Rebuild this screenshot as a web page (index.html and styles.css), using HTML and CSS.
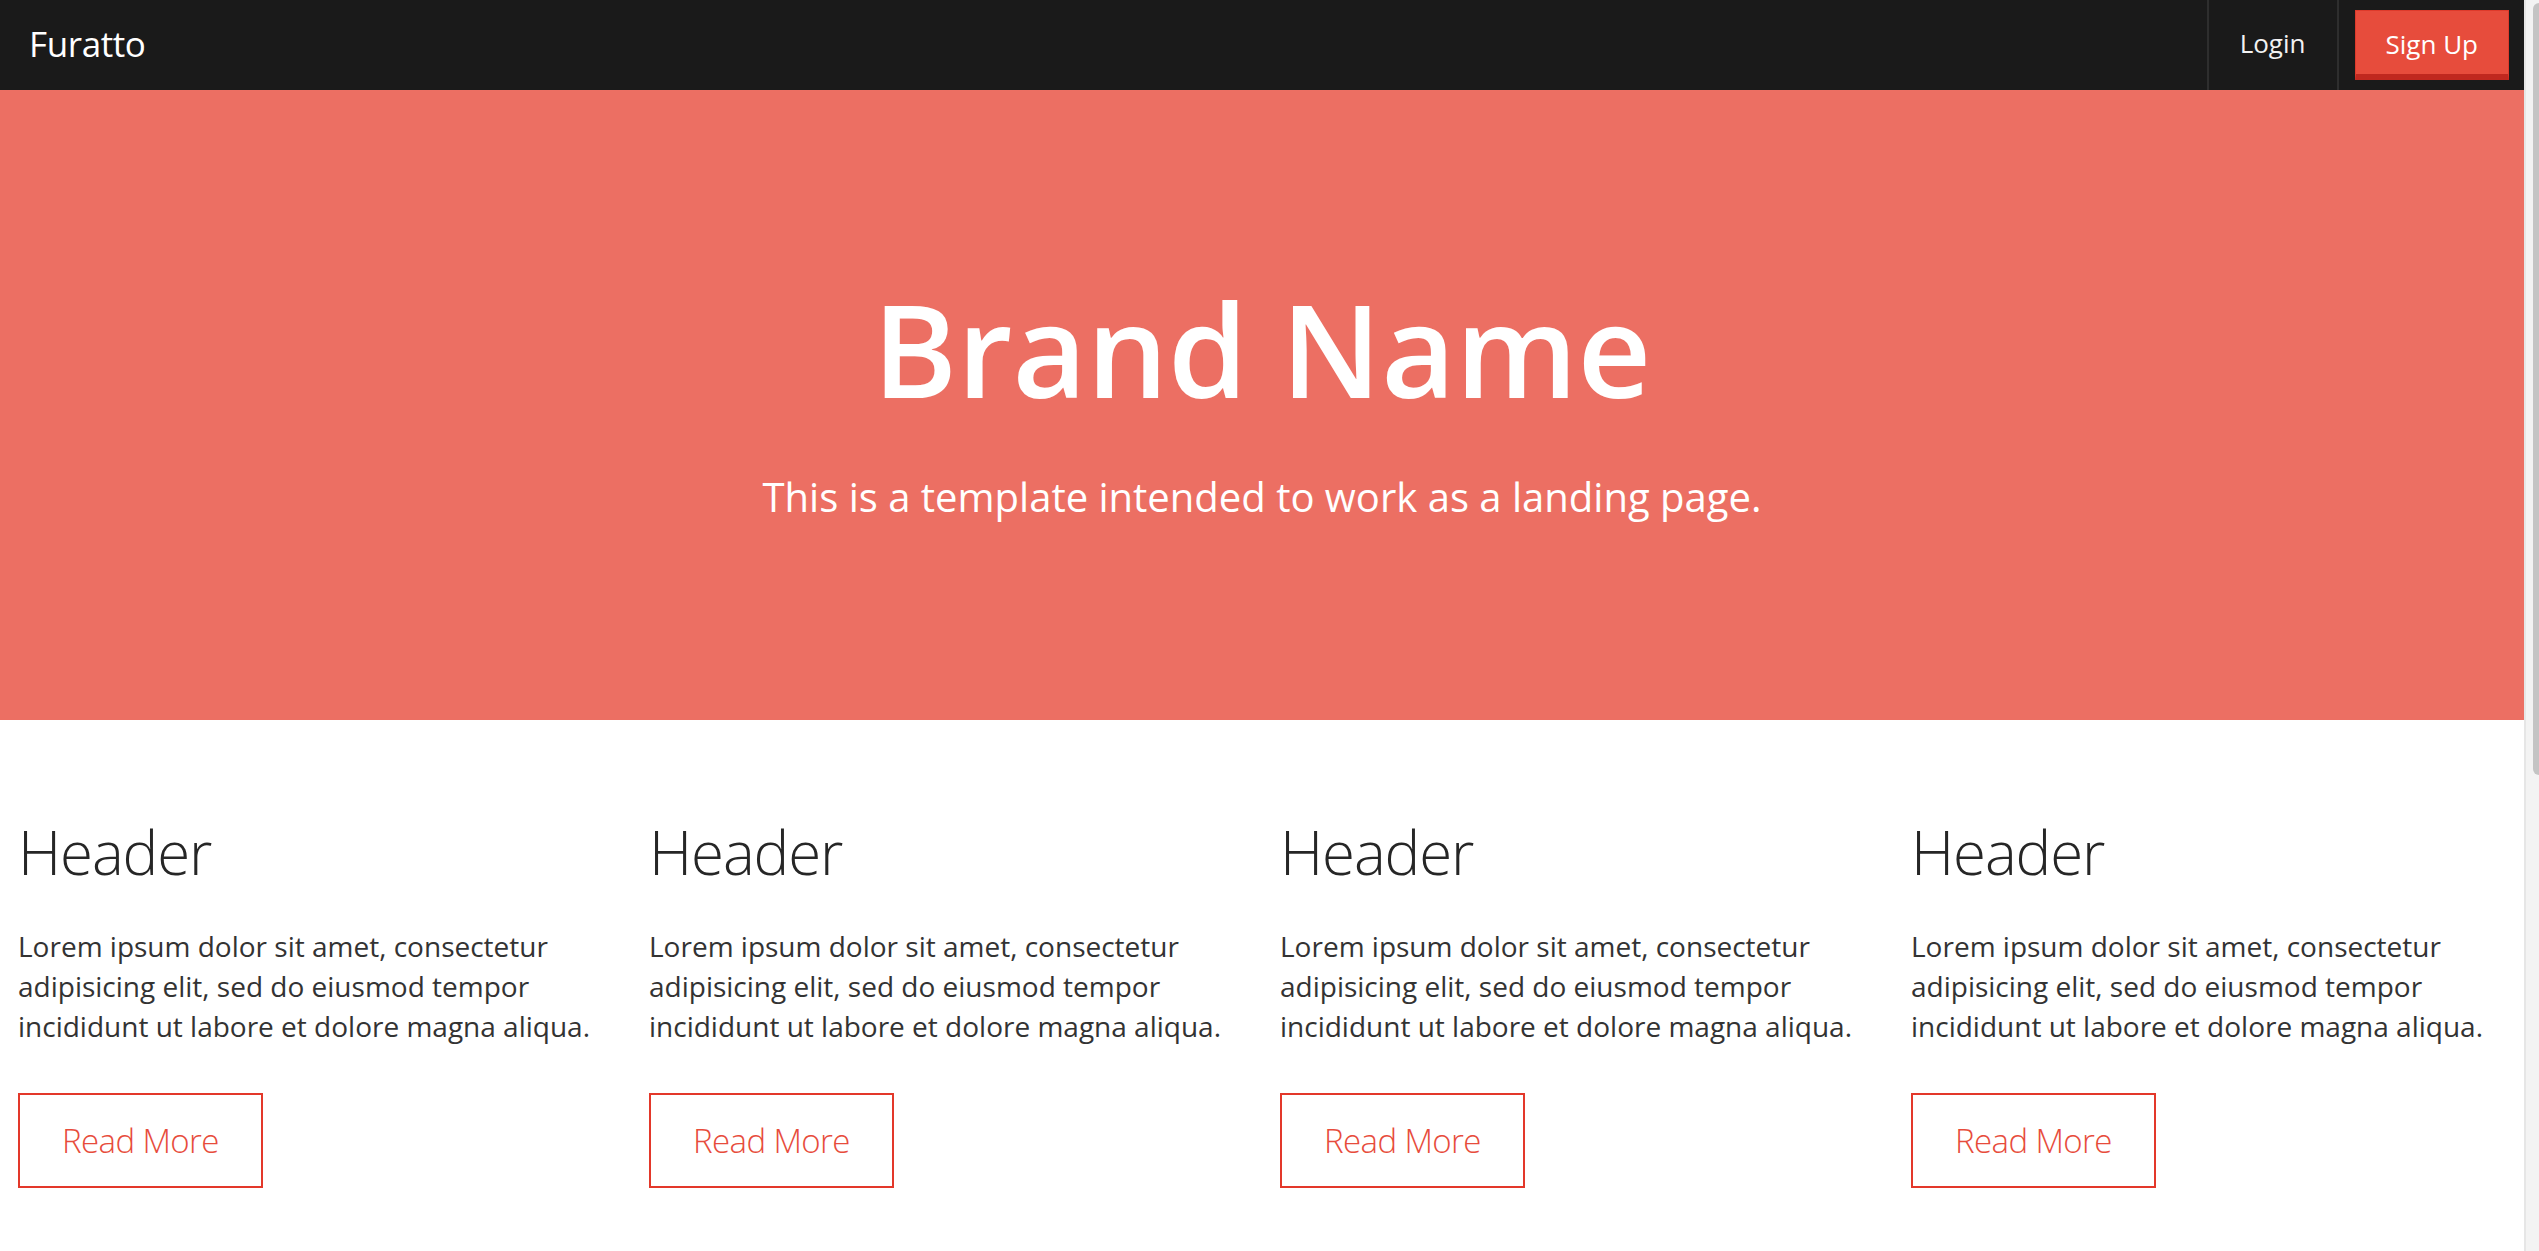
FILE: index.html
```html
<!DOCTYPE html>
<html lang="en">
<head>
<meta charset="utf-8">
<title>Furatto</title>
<link rel="stylesheet" href="styles.css">
</head>
<body>
<div class="page">
  <header class="navbar">
    <a class="brand" href="#">Furatto</a>
    <nav class="nav-right">
      <a class="nav-link" href="#">Login</a>
      <div class="nav-cta"><a class="btn-signup" href="#">Sign Up</a></div>
    </nav>
  </header>
  <section class="hero">
    <h1 class="hero-title">Brand Name</h1>
    <p class="hero-sub">This is a template intended to work as a landing page.</p>
  </section>
  <section class="features">
    <div class="feature">
      <h2 class="feature-title">Header</h2>
      <p class="feature-text">Lorem ipsum dolor sit amet, consectetur adipisicing elit, sed do eiusmod tempor incididunt ut labore et dolore magna aliqua.</p>
      <a class="btn-outline" href="#">Read More</a>
    </div>
    <div class="feature">
      <h2 class="feature-title">Header</h2>
      <p class="feature-text">Lorem ipsum dolor sit amet, consectetur adipisicing elit, sed do eiusmod tempor incididunt ut labore et dolore magna aliqua.</p>
      <a class="btn-outline" href="#">Read More</a>
    </div>
    <div class="feature">
      <h2 class="feature-title">Header</h2>
      <p class="feature-text">Lorem ipsum dolor sit amet, consectetur adipisicing elit, sed do eiusmod tempor incididunt ut labore et dolore magna aliqua.</p>
      <a class="btn-outline" href="#">Read More</a>
    </div>
    <div class="feature">
      <h2 class="feature-title">Header</h2>
      <p class="feature-text">Lorem ipsum dolor sit amet, consectetur adipisicing elit, sed do eiusmod tempor incididunt ut labore et dolore magna aliqua.</p>
      <a class="btn-outline" href="#">Read More</a>
    </div>
  </section>
</div>
<div class="scrollbar"><div class="scroll-thumb"></div></div>
</body>
</html>
```

FILE: styles.css
```css
html, body {
  margin: 0;
  padding: 0;
  height: 100%;
}
body {
  display: flex;
  flex-direction: row;
  overflow: hidden;
  background: #fff;
  font-family: "Open Sans", "DejaVu Sans", sans-serif;
  color: #333;
}
.page {
  flex: 1;
  min-width: 0;
  height: 100%;
  overflow: hidden;
}

/* navbar */
.navbar {
  height: 90px;
  background: #1a1a1a;
  display: flex;
  align-items: stretch;
  justify-content: space-between;
}
.brand {
  padding-left: 29px;
  font-size: 35px;
  line-height: 88px;
  color: #fff;
  text-decoration: none;
  font-weight: 400;
  letter-spacing: -0.4px;
}
.nav-right {
  display: flex;
  align-items: stretch;
}
.nav-link {
  display: block;
  padding: 0 31px 4px;
  border-left: 2px solid #2e2e2e;
  border-right: 2px solid #2e2e2e;
  font-size: 26px;
  line-height: 86px;
  color: #f2f2f2;
  text-decoration: none;
}
.nav-cta {
  padding: 10px 15px 10px 16px;
  display: flex;
}
.btn-signup {
  display: block;
  box-sizing: border-box;
  height: 70px;
  padding: 14px 30px 0;
  background: #e74c3c;
  border: 1px solid #de3a2b;
  border-bottom: 6px solid #c0281f;
  font-size: 26px;
  line-height: 38px;
  color: #fff;
  text-decoration: none;
}

/* hero */
.hero {
  box-sizing: border-box;
  height: 630px;
  padding-top: 189px;
  background: #ec6f63;
  text-align: center;
  color: #fff;
}
.hero-title {
  margin: 0;
  font-size: 128px;
  line-height: 140px;
  font-weight: 600;
  letter-spacing: 0;
}
.hero-sub {
  margin: 50px 0 0;
  font-size: 40px;
  line-height: 56px;
  font-weight: 400;
}

/* features */
.features {
  display: grid;
  grid-template-columns: repeat(4, 1fr);
  padding-top: 99px;
}
.feature {
  padding: 0 18px;
}
.feature-title {
  margin: 0;
  font-size: 60px;
  line-height: 66px;
  font-weight: 300;
  color: #262626;
  letter-spacing: -1.1px;
}
.feature-text {
  margin: 41px 0 47px;
  font-size: 28px;
  line-height: 40px;
  color: #333;
}
.btn-outline {
  display: inline-block;
  padding: 21px 42px 20px;
  border: 2px solid #e3382a;
  font-size: 33px;
  line-height: 50px;
  font-weight: 300;
  color: #e74c3c;
  text-decoration: none;
  letter-spacing: -0.6px;
}

/* browser scrollbar */
.scrollbar {
  width: 15px;
  height: 100%;
  flex: none;
  box-sizing: border-box;
  background: #f3f3f3;
  border-left: 2px solid #e6e6e6;
  padding: 3px 0 0 7px;
}
.scroll-thumb {
  height: 772px;
  background: #c4c4c4;
  border-radius: 7px 0 0 7px;
}
```
